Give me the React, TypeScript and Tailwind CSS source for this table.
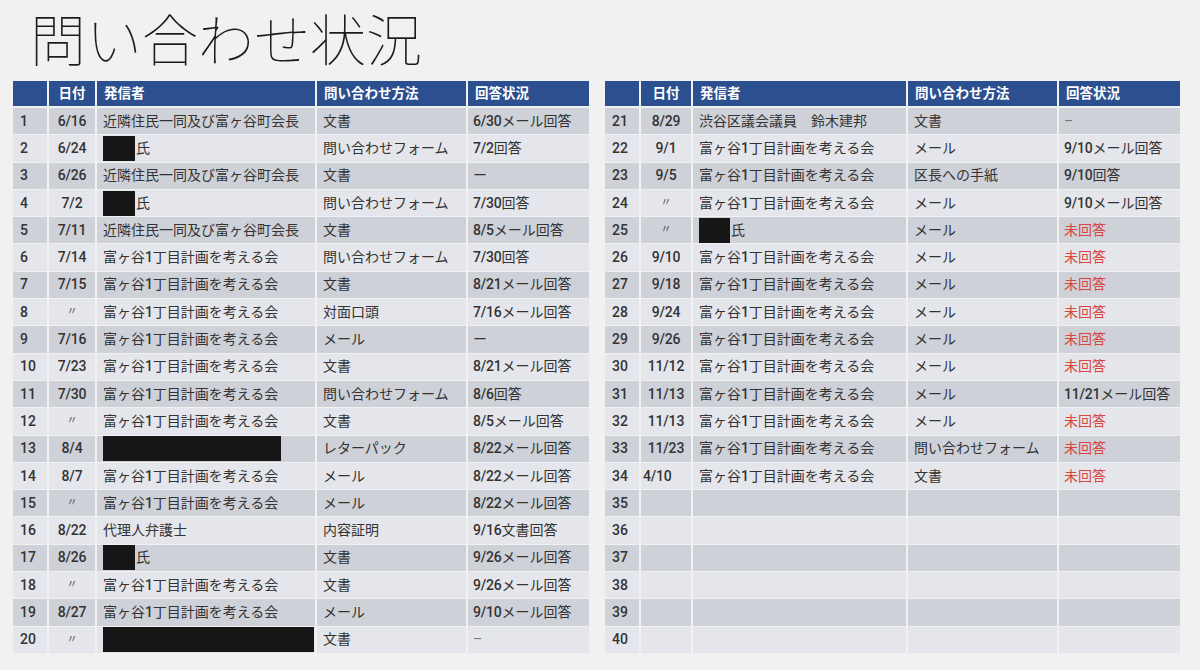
import React from "react";

type Sender = string | { black: number; tail?: string };

interface Row {
  n: number;
  d: string;
  s?: Sender;
  m?: string;
  r?: string;
  leftDate?: boolean;
}

const KAI = "富ヶ谷1丁目計画を考える会";
const KINRIN = "近隣住民一同及び富ヶ谷町会長";
const DITTO = "〃";

const leftRows: Row[] = [
  { n: 1, d: "6/16", s: KINRIN, m: "文書", r: "6/30メール回答" },
  { n: 2, d: "6/24", s: { black: 32, tail: "氏" }, m: "問い合わせフォーム", r: "7/2回答" },
  { n: 3, d: "6/26", s: KINRIN, m: "文書", r: "ー" },
  { n: 4, d: "7/2", s: { black: 32, tail: "氏" }, m: "問い合わせフォーム", r: "7/30回答" },
  { n: 5, d: "7/11", s: KINRIN, m: "文書", r: "8/5メール回答" },
  { n: 6, d: "7/14", s: KAI, m: "問い合わせフォーム", r: "7/30回答" },
  { n: 7, d: "7/15", s: KAI, m: "文書", r: "8/21メール回答" },
  { n: 8, d: DITTO, s: KAI, m: "対面口頭", r: "7/16メール回答" },
  { n: 9, d: "7/16", s: KAI, m: "メール", r: "ー" },
  { n: 10, d: "7/23", s: KAI, m: "文書", r: "8/21メール回答" },
  { n: 11, d: "7/30", s: KAI, m: "問い合わせフォーム", r: "8/6回答" },
  { n: 12, d: DITTO, s: KAI, m: "文書", r: "8/5メール回答" },
  { n: 13, d: "8/4", s: { black: 178 }, m: "レターパック", r: "8/22メール回答" },
  { n: 14, d: "8/7", s: KAI, m: "メール", r: "8/22メール回答" },
  { n: 15, d: DITTO, s: KAI, m: "メール", r: "8/22メール回答" },
  { n: 16, d: "8/22", s: "代理人弁護士", m: "内容証明", r: "9/16文書回答" },
  { n: 17, d: "8/26", s: { black: 32, tail: "氏" }, m: "文書", r: "9/26メール回答" },
  { n: 18, d: DITTO, s: KAI, m: "文書", r: "9/26メール回答" },
  { n: 19, d: "8/27", s: KAI, m: "メール", r: "9/10メール回答" },
  { n: 20, d: DITTO, s: { black: 211 }, m: "文書", r: "–" },
];

const rightRows: Row[] = [
  { n: 21, d: "8/29", s: "渋谷区議会議員　鈴木建邦", m: "文書", r: "–" },
  { n: 22, d: "9/1", s: KAI, m: "メール", r: "9/10メール回答" },
  { n: 23, d: "9/5", s: KAI, m: "区長への手紙", r: "9/10回答" },
  { n: 24, d: DITTO, s: KAI, m: "メール", r: "9/10メール回答" },
  { n: 25, d: DITTO, s: { black: 31, tail: "氏" }, m: "メール", r: "未回答" },
  { n: 26, d: "9/10", s: KAI, m: "メール", r: "未回答" },
  { n: 27, d: "9/18", s: KAI, m: "メール", r: "未回答" },
  { n: 28, d: "9/24", s: KAI, m: "メール", r: "未回答" },
  { n: 29, d: "9/26", s: KAI, m: "メール", r: "未回答" },
  { n: 30, d: "11/12", s: KAI, m: "メール", r: "未回答" },
  { n: 31, d: "11/13", s: KAI, m: "メール", r: "11/21メール回答" },
  { n: 32, d: "11/13", s: KAI, m: "メール", r: "未回答" },
  { n: 33, d: "11/23", s: KAI, m: "問い合わせフォーム", r: "未回答" },
  { n: 34, d: "4/10", s: KAI, m: "文書", r: "未回答", leftDate: true },
  { n: 35, d: "" },
  { n: 36, d: "" },
  { n: 37, d: "" },
  { n: 38, d: "" },
  { n: 39, d: "" },
  { n: 40, d: "" },
];

// digits get a heavier latin face, like the print
function Txt({ t }: { t: string }) {
  const parts = t.split(/([0-9/]+)/);
  return (
    <>
      {parts.map((p, i) =>
        /^[0-9/]+$/.test(p) ? (
          <span key={i} className="font-medium tracking-[-0.2px]">
            {p}
          </span>
        ) : (
          <span key={i}>{p}</span>
        )
      )}
    </>
  );
}

function SenderCell({ s }: { s?: Sender }) {
  if (!s) return null;
  if (typeof s === "string") return <Txt t={s} />;
  return (
    <span className="flex items-center h-full">
      <span className="bg-[#161616] h-[25px]" style={{ width: s.black }} />
      {s.tail && <span className="ml-[1px]">{s.tail}</span>}
    </span>
  );
}

function Table({ rows, cols }: { rows: Row[]; cols: string }) {
  const cell = "flex items-center overflow-hidden whitespace-nowrap";
  return (
    <div className={`grid ${cols} gap-x-[2px] gap-y-[1px]`}>
      {["", "日付", "発信者", "問い合わせ方法", "回答状況"].map((h, i) => (
        <div
          key={h + i}
          className={`${cell} h-[25px] mb-[1px] bg-[#2c4f8f] text-white font-bold text-[13.5px] ${
            i === 1 ? "justify-center" : "pl-[7px]"
          }`}
        >
          {h}
        </div>
      ))}
      {rows.map((r) => {
        const bg = r.n % 2 === 1 ? "bg-[#cfd1d9]" : "bg-[#e5e6eb]";
        const h = "h-[26.3px]";
        return (
          <React.Fragment key={r.n}>
            <div className={`${cell} ${h} ${bg} pl-[7px] font-medium`}>{r.n}</div>
            <div
              className={`${cell} ${h} ${bg} ${r.leftDate ? "pl-[2px]" : "justify-center"} ${
                r.d === DITTO ? "text-[11px] text-[#555]" : "font-medium tracking-[-0.2px]"
              }`}
            >
              {r.d}
            </div>
            <div className={`${cell} ${h} ${bg} pl-[6px]`}>
              <SenderCell s={r.s} />
            </div>
            <div className={`${cell} ${h} ${bg} pl-[6px]`}>{r.m}</div>
            <div
              className={`${cell} ${h} ${bg} pl-[5px] ${
                r.r === "未回答" ? "text-[#d8473f]" : r.r === "–" ? "text-[#777]" : ""
              }`}
            >
              {r.r && <Txt t={r.r} />}
            </div>
          </React.Fragment>
        );
      })}
    </div>
  );
}

export default function App() {
  return (
    <div className="w-[1200px] h-[670px] bg-[#f1f1f1] text-[#333] text-[14px] font-['Roboto','Noto_Sans_CJK_JP',sans-serif] overflow-hidden">
      <div className="h-[81px] pl-[30px] pt-[2px]">
        <h1 className="text-[56px] leading-[70px] font-thin text-[#1c1c1c] font-['Noto_Sans_CJK_JP',sans-serif]">
          問い合わせ状況
        </h1>
      </div>
      <div className="flex pl-[13px] gap-[16px]">
        <Table rows={leftRows} cols="grid-cols-[34px_46px_218px_149px_121px]" />
        <Table rows={rightRows} cols="grid-cols-[34px_50px_213px_149px_121px]" />
      </div>
    </div>
  );
}
